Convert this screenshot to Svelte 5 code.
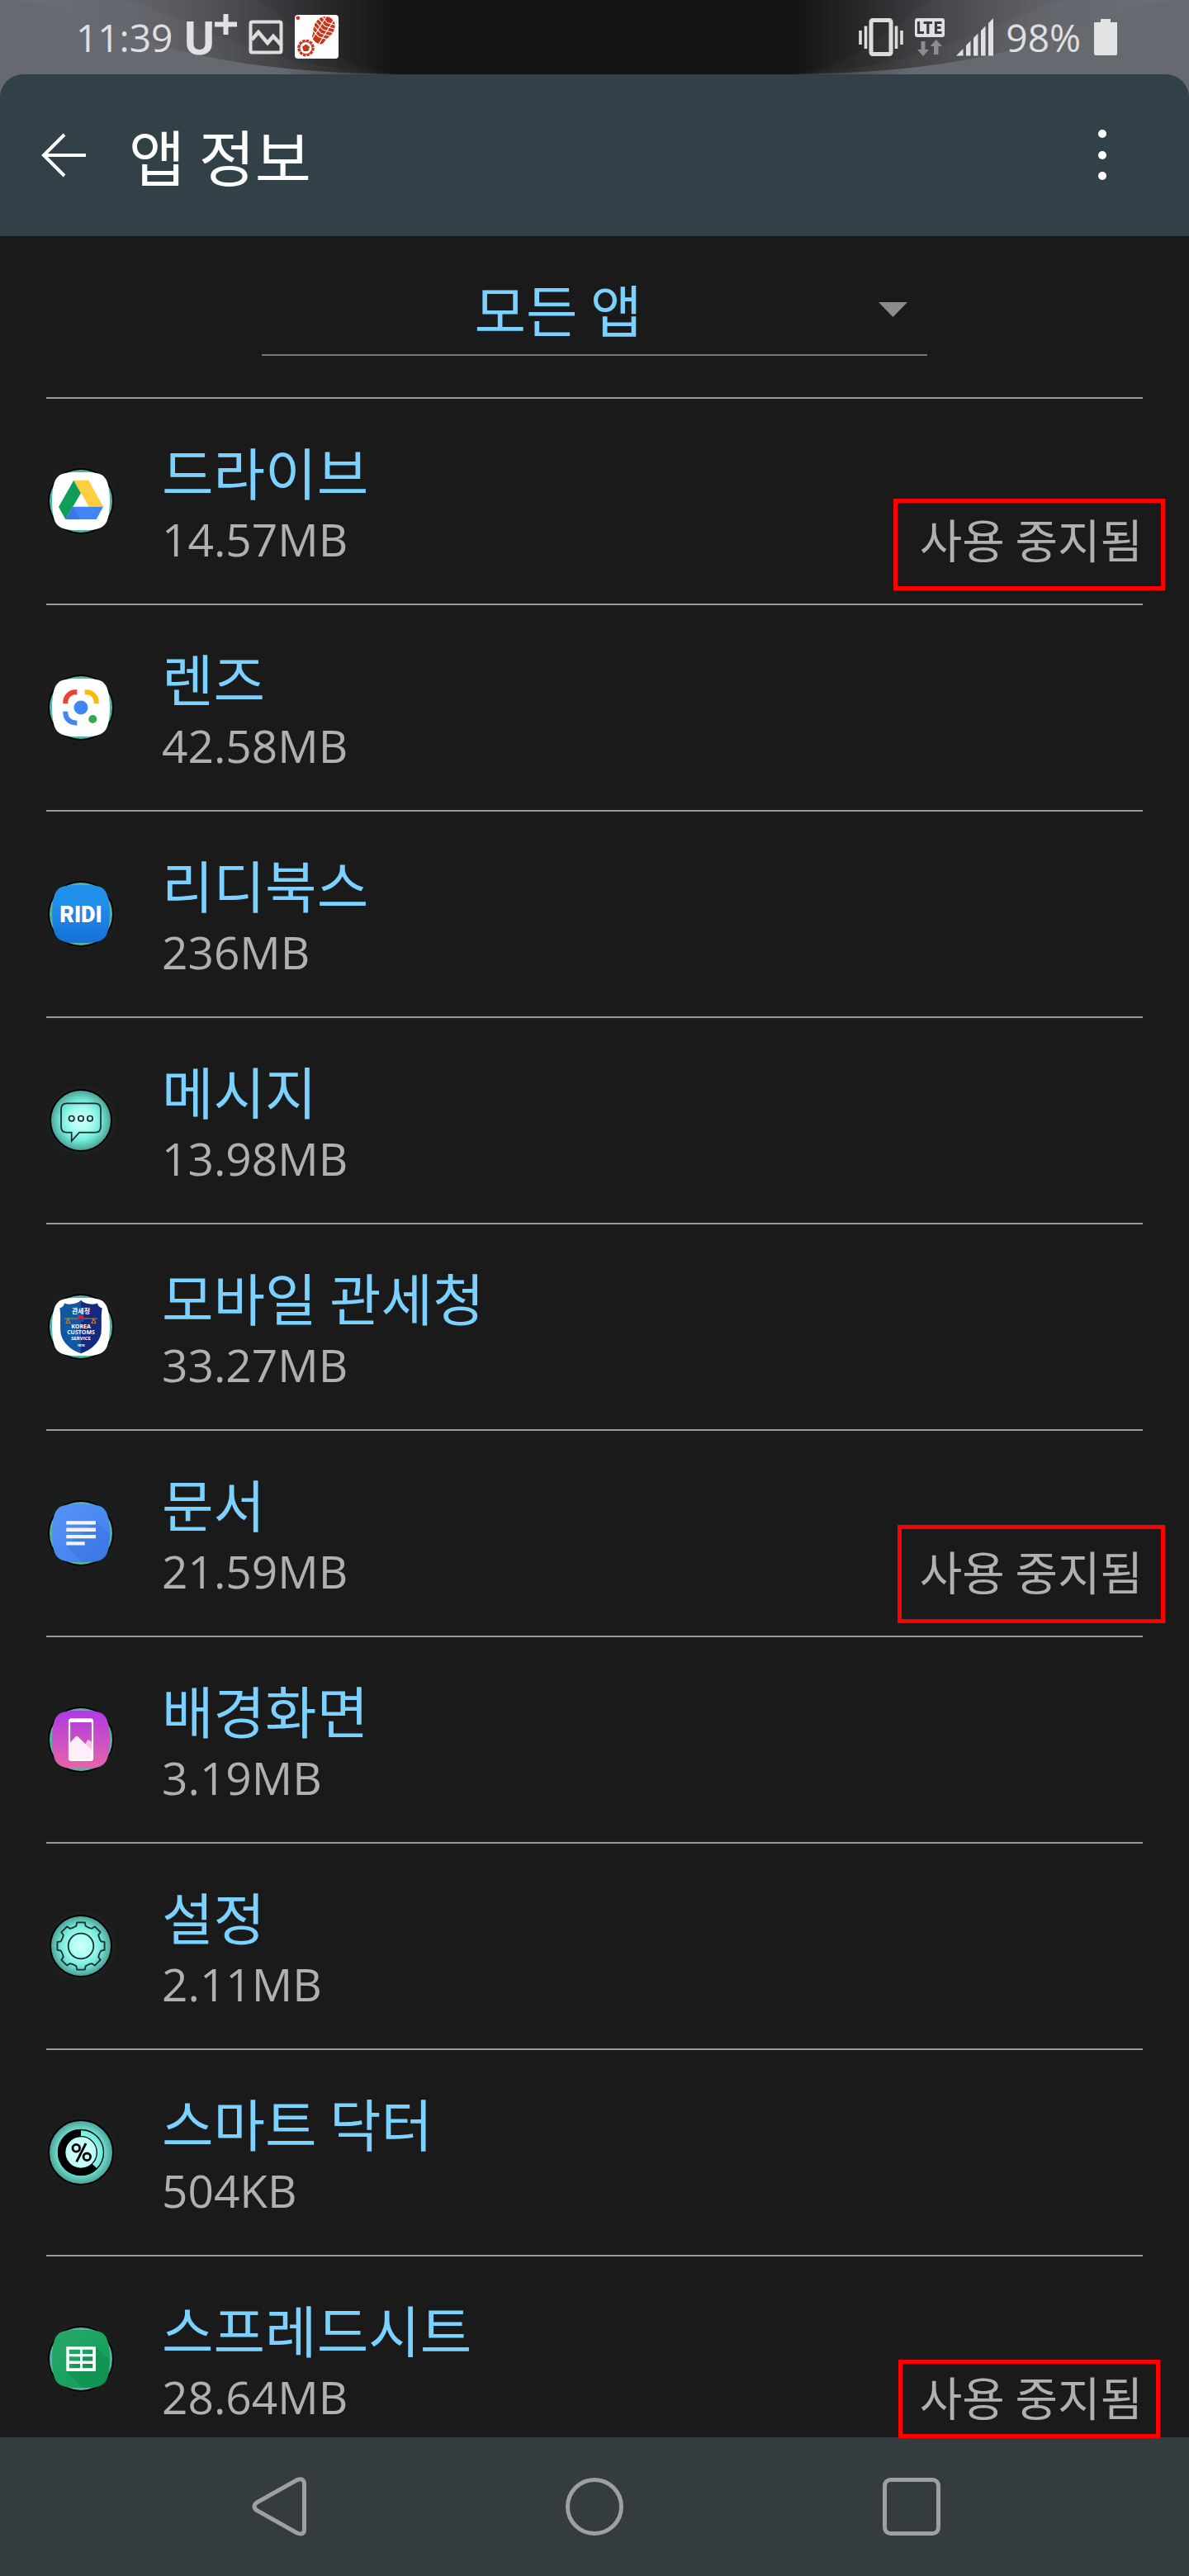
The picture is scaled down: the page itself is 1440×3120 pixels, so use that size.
<script>
  const apps = [
    { name: '드라이브', size: '14.57MB', icon: 'drive', mark: 'mark-a' },
    { name: '렌즈', size: '42.58MB', icon: 'lens' },
    { name: '리디북스', size: '236MB', icon: 'ridi' },
    { name: '메시지', size: '13.98MB', icon: 'messages' },
    { name: '모바일 관세청', size: '33.27MB', icon: 'customs' },
    { name: '문서', size: '21.59MB', icon: 'docs', mark: 'mark-b' },
    { name: '배경화면', size: '3.19MB', icon: 'wallpaper' },
    { name: '설정', size: '2.11MB', icon: 'settings' },
    { name: '스마트 닥터', size: '504KB', icon: 'doctor' },
    { name: '스프레드시트', size: '28.64MB', icon: 'sheets', mark: 'mark-c' }
  ];

  const squircle =
    'M42 7C56 7 62 7.5 67 10C73 14 75 20 76 28C77.3 37 77.3 47 76 56C75 64 73 70 67 73.5C62 76.5 56 77 42 77C28 77 22 76.5 17 73.5C11 70 9 64 8 56C6.7 47 6.7 37 8 28C9 20 11 14 17 10C22 7.5 28 7 42 7Z';
  const plateFill = {
    drive: '#fff',
    lens: '#fff',
    ridi: 'url(#g-ridi)',
    customs: '#fff',
    docs: 'url(#g-docs)',
    wallpaper: 'url(#g-wall)',
    sheets: 'url(#g-sheets)'
  };

  // Outline of an eight-toothed gear centred on 42,42.
  const gear = Array.from({ length: 8 }, (_, i) => {
    const a = (i * Math.PI) / 4;
    return [[-8, -23], [-5.6, -24.4], [-4.8, -28.6], [4.8, -28.6], [5.6, -24.4], [8, -23]]
      .map(([x, y]) => {
        const px = 42 + x * Math.cos(a) - y * Math.sin(a);
        const py = 42 + x * Math.sin(a) + y * Math.cos(a);
        return `${px.toFixed(1)},${py.toFixed(1)}`;
      })
      .join(' ');
  }).join(' ');
</script>

<svg class="defs" width="0" height="0" aria-hidden="true">
  <defs>
    <radialGradient id="g-mint">
      <stop offset="0" stop-color="#d2fffa" />
      <stop offset="0.35" stop-color="#a9fff3" />
      <stop offset="0.65" stop-color="#74ecdb" />
      <stop offset="1" stop-color="#4a9e93" />
    </radialGradient>
    <radialGradient id="g-glow">
      <stop offset="0.7" stop-color="#2a302f" />
      <stop offset="1" stop-color="#1b1c1c" />
    </radialGradient>
    <linearGradient id="g-ridi" x1="0" y1="0" x2="0" y2="1">
      <stop offset="0.3" stop-color="#2190ea" />
      <stop offset="1" stop-color="#1670d8" />
    </linearGradient>
    <linearGradient id="g-docs" x1="0" y1="0" x2="1" y2="1">
      <stop offset="0" stop-color="#5693f5" />
      <stop offset="1" stop-color="#3f7ff0" />
    </linearGradient>
    <linearGradient id="g-wall" x1="0" y1="0" x2="0" y2="1">
      <stop offset="0" stop-color="#b03ae2" />
      <stop offset="1" stop-color="#e665a8" />
    </linearGradient>
    <linearGradient id="g-sheets" x1="0" y1="0" x2="1" y2="1">
      <stop offset="0" stop-color="#28a868" />
      <stop offset="1" stop-color="#109c57" />
    </linearGradient>
    <linearGradient id="g-sky" gradientUnits="userSpaceOnUse" x1="0" y1="0" x2="480" y2="0">
      <stop offset="0" stop-color="#666872" />
      <stop offset="0.33" stop-color="#5d6068" />
      <stop offset="0.42" stop-color="#595a5e" />
      <stop offset="0.62" stop-color="#434447" />
      <stop offset="0.83" stop-color="#27282a" />
      <stop offset="1" stop-color="#131416" />
    </linearGradient>
    <linearGradient id="g-wave" gradientUnits="userSpaceOnUse" x1="0" y1="0" x2="480" y2="0">
      <stop offset="0" stop-color="#676971" />
      <stop offset="0.7" stop-color="#676971" />
      <stop offset="1" stop-color="#3a3b3f" />
    </linearGradient>
  </defs>
</svg>

{#snippet waves()}
  <svg class="waves" viewBox="0 0 480 130" preserveAspectRatio="none" aria-hidden="true">
    <rect width="480" height="130" fill="url(#g-sky)" />
    <path d="M310 0C350 20 395 80 480 90V130H0V0Z" fill="#fff" opacity="0.025" />
    <path d="M150 0C240 22 290 78 480 90V130H0V0Z" fill="#fff" opacity="0.03" />
    <path d="M20 0C130 14 170 86 480 90V130H0V0Z" fill="url(#g-wave)" />
  </svg>
{/snippet}

{#snippet appIcon(kind)}
  <svg class="app-icon" viewBox="0 0 84 84" aria-hidden="true">
    <rect width="84" height="84" fill="url(#g-glow)" />
    {#if plateFill[kind]}
      <circle cx="42" cy="42" r="39" fill="#55b3a6" stroke="#000" stroke-width="2" />
      <path d={squircle} fill={plateFill[kind]} />
    {:else}
      <circle cx="42" cy="42" r={kind === 'doctor' ? 39 : 37} fill="url(#g-mint)" stroke="#000" stroke-width="2" />
    {/if}

    {#if kind === 'drive'}
      <path d="M33.3 16.7L42 32.3L23.3 64L15 49Z" fill="#109d58" />
      <path d="M33.3 16.7H51.3L69 48.7H51.7Z" fill="#ffcd40" />
      <path d="M32.3 48.7H69L60.7 64H23.3Z" fill="#4285f4" />
      <path d="M32.3 48.7L41 64H23.3Z" fill="#3367d6" opacity="0.5" />
    {:else if kind === 'lens'}
      <g fill="none" stroke-width="6">
        <path d="M23.3 37.3V35.3A12 12 0 0 1 35.3 23.3H37.3" stroke="#ea4335" />
        <path d="M46.7 23.3H48.7A12 12 0 0 1 60.7 35.3V37.3" stroke="#fbbc04" />
        <path d="M23.3 46.7V48.4A12 12 0 0 0 35.3 60.4H37.3" stroke="#4285f4" />
      </g>
      <circle cx="42" cy="42" r="8.5" fill="#4285f4" />
      <circle cx="56.3" cy="56" r="5" fill="#34a853" />
    {:else if kind === 'ridi'}
      <text x="42" y="51.5" text-anchor="middle" class="ridi">RIDI</text>
    {:else if kind === 'messages'}
      <g fill="none" stroke="#1d2a29" stroke-width="1.7">
        <path d="M25 21.3H59Q66 21.3 66 28.5V49.5Q66 56.7 59 56.7H40L30.7 67V56.7H25Q18 56.7 18 49.5V28.5Q18 21.3 25 21.3Z" />
        <circle cx="30.7" cy="39.7" r="3.2" />
        <circle cx="42" cy="39.7" r="3.2" />
        <circle cx="53" cy="39.7" r="3.2" />
      </g>
    {:else if kind === 'customs'}
      <path d="M42 9.7Q38 14 30 14.5Q25 15 22 13.5Q21 18 16.3 19.5C18 28 16.5 38 17.5 50C20 62 30 70 42 74.3Z" fill="#1058a2" />
      <path d="M42 9.7Q46 14 54 14.5Q59 15 62 13.5Q63 18 67.7 19.5C66 28 67.5 38 66.5 50C64 62 54 70 42 74.3Z" fill="#132a80" />
      <g fill="none" stroke="#b98532" stroke-width="1.2">
        <path d="M22 32H62M26.3 32L24 37.5H29L26.3 32M57.3 32L55 37.5H60L57.3 32" />
      </g>
      <path d="M38 32A4 4 0 0 1 46 32Z" fill="#d8232f" />
      <path d="M38 32A4 4 0 0 0 46 32Z" fill="#1f4fb0" />
      <g fill="#fff" text-anchor="middle" class="customs">
        <text x="42" y="25.5" font-size="8">관세청</text>
        <text x="42" y="44" font-size="7">KOREA</text>
        <text x="42" y="51" font-size="7">CUSTOMS</text>
        <text x="42" y="57.6" font-size="6">SERVICE</text>
        <text x="42" y="66" font-size="4">1878</text>
      </g>
    {:else if kind === 'docs'}
      <path d="M60 27.5L76.5 43C76.5 60 76 74 60 76.5L43 76.8L24.3 58Z" fill="#3a74dd" opacity="0.55" />
      <path d="M24.3 27.3H60V31.6H24.3ZM24.3 35.6H60V39.9H24.3ZM24.3 43.9H60V48.2H24.3ZM24.3 52.2H46.7V56.5H24.3Z" fill="#f4f4f4" />
    {:else if kind === 'wallpaper'}
      <rect x="28" y="17.3" width="28" height="49.6" rx="2.5" fill="none" stroke="#fff" stroke-width="2.2" />
      <path d="M28 17.5H56V21H28Z" fill="#fff" />
      <path d="M46 50L50 42.5Q51 41.5 52 42.5L55.3 45.5V56Z" fill="#f7c3e4" />
      <path d="M29 45.5L35.5 38.5Q37 37 38.5 38.5L55.3 55V66H29Z" fill="#fdeefa" />
    {:else if kind === 'settings'}
      <g fill="none" stroke="#1c2b2a" stroke-width="1.8" stroke-linejoin="round">
        <polygon points={gear} />
        <circle cx="42" cy="42" r="15.3" />
      </g>
    {:else if kind === 'doctor'}
      <circle cx="42" cy="42" r="19.3" fill="#d6fffb" opacity="0.6" />
      <circle cx="42" cy="42" r="27.5" fill="none" stroke="#000" stroke-width="1.3" />
      <circle cx="42" cy="42" r="19.3" fill="none" stroke="#000" stroke-width="1.3" />
      <path d="M42 18.5A23.5 23.5 0 1 0 58.6 58.6" fill="none" stroke="#000" stroke-width="9" />
      <g fill="none" stroke="#000" stroke-width="2.8">
        <circle cx="36.3" cy="36.7" r="4.3" />
        <circle cx="49.3" cy="47.3" r="4.3" />
        <path d="M48 31L36.7 53.3" />
      </g>
    {:else if kind === 'sheets'}
      <path d="M60 27.5L76.5 43C76.5 60 76 74 60 76.5L43 76.8L24.3 57Z" fill="#0c8a4b" opacity="0.5" />
      <path fill-rule="evenodd" fill="#fff" d="M24.3 27.3H60V57H24.3ZM27.8 30.7V36H41V30.7ZM44 30.7V36H56.3V30.7ZM27.8 39.3V44.6H41V39.3ZM44 39.3V44.6H56.3V39.3ZM27.8 48V53.3H41V48ZM44 48V53.3H56.3V48Z" />
    {/if}
  </svg>
{/snippet}

<div class="screen">
  <div class="backdrop">
    {@render waves()}
    <div class="flip">{@render waves()}</div>
  </div>

  <div class="status-bar">
    <div class="group">
      <span class="status-text">11:39</span>
      <svg width="64" height="86" viewBox="0 0 64 86" aria-label="U+">
        <text x="0" y="64" class="carrier">U</text>
        <path d="M37 27.5H64M50.5 15V40" stroke="#e0e1e2" stroke-width="6" />
      </svg>
      <svg width="42" height="42" viewBox="0 0 42 42" aria-hidden="true">
        <g fill="none" stroke="#dcdddd" stroke-width="4">
          <rect x="2.5" y="2.5" width="37" height="37" rx="2" />
          <path d="M4 24L12 15L23 28L30 20L40 31" stroke-width="4.5" />
        </g>
      </svg>
      <svg width="54" height="54" viewBox="0 0 54 54" aria-hidden="true">
        <rect width="53" height="53" rx="4" fill="#fff" />
        <circle cx="3.8" cy="3.8" r="2.4" fill="#c8351b" />
        <g transform="rotate(32 34 18)">
          <path d="M33 1C42 0 47 8 46 16C45 23 43 26 43 31C43 37 29 37 27 31C26 26 22 22 22 15C22 8 26 2 33 1Z" fill="#c8351b" />
          <g stroke="#fff" stroke-width="1.1" fill="none">
            <path d="M20 4L34 8L48 4M20 9L34 13L48 9M20 14L34 18L48 14M20 19L34 23L48 19M20 24L34 28L48 24" />
            <path d="M29 0V36M39 0V36" />
          </g>
        </g>
        <circle cx="13.5" cy="40" r="9" fill="none" stroke="#c8351b" stroke-width="2.6" stroke-dasharray="3.6 1.1" />
        <circle cx="13.5" cy="40" r="7.6" fill="none" stroke="#c8351b" stroke-width="1.2" />
        <path d="M13.5 35.5L18 38.8L16.3 44H10.7L9 38.8Z" fill="#c8351b" />
      </svg>
    </div>
    <div class="group">
      <svg width="54" height="46" viewBox="0 0 54 46" aria-hidden="true">
        <rect x="15" y="2.5" width="24" height="41" rx="2" fill="none" stroke="#dcdddb" stroke-width="5" />
        <path d="M8.5 9.5V37M45.5 9.5V37M2 15V32M52 15V32" stroke="#dcdddb" stroke-width="3.6" />
      </svg>
      <svg width="36" height="46" viewBox="0 0 36 46" aria-label="LTE">
        <rect width="36" height="23" rx="3" fill="#dfe0e2" />
        <path d="M4.5 4V17.5H11M10.5 5.5H21M15.8 5V19M32.5 5.5H25.5V17.5H32.5M25.5 11.5H31.5" fill="none" stroke="#3a3b40" stroke-width="3.2" />
        <path d="M7.5 28H12.5V38H17L10 46L3 38H7.5ZM23 44V34H18.5L25.8 26L33 34H28.5V44Z" fill="#8b8c90" />
      </svg>
      <svg width="46" height="46" viewBox="0 0 46 46" aria-hidden="true">
        <path d="M0 45.5L8.5 37V45.5ZM12 33L17.5 27.5V45.5H12ZM21 24L26.5 18.5V45.5H21ZM30 15L35.5 9.5V45.5H30ZM39 6L45 0V45.5H39Z" fill="#e0e1e3" />
      </svg>
      <span class="status-text">98%</span>
      <svg width="30" height="45" viewBox="0 0 30 45" aria-hidden="true">
        <path d="M10 0H22V4H30V42Q30 44 28 44H4Q2 44 2 42V4H10Z" fill="#e2e3e5" />
      </svg>
    </div>
  </div>

  <header>
    <button class="icon-button" aria-label="뒤로">
      <svg width="54" height="54" viewBox="0 0 54 54" aria-hidden="true">
        <path d="M28 2L3 27L28 52M3 27H54" fill="none" stroke="#fff" stroke-width="4" />
      </svg>
    </button>
    <h1>앱 정보</h1>
    <button class="icon-button more" aria-label="더보기">
      <svg width="12" height="64" viewBox="0 0 12 64" aria-hidden="true">
        <g fill="#fff"><circle cx="6" cy="6" r="5" /><circle cx="6" cy="32" r="5" /><circle cx="6" cy="57" r="5" /></g>
      </svg>
    </button>
  </header>

  <main>
    <div class="filter">
      <select aria-label="앱 필터">
        <option>모든 앱</option>
      </select>
      <svg class="caret" width="35" height="18" viewBox="0 0 35 18" aria-hidden="true">
        <path d="M0 0H35L17.5 18Z" fill="#8c8c8c" />
      </svg>
    </div>

    <ul>
      {#each apps as app}
        <li>
          {@render appIcon(app.icon)}
          <div class="info">
            <span class="name">{app.name}</span>
            <span class="size">{app.size}</span>
          </div>
          {#if app.mark}
            <span class="state {app.mark}">사용 중지됨</span>
          {/if}
        </li>
      {/each}
    </ul>
  </main>

  <nav>
    <button aria-label="뒤로 가기">
      <svg width="72" height="72" viewBox="0 0 72 72" aria-hidden="true">
        <path d="M60 3.5L11 31Q5 35.5 11 40.5L60 68Q68 71 68.5 64V8Q68 1 60 3.5Z" />
      </svg>
    </button>
    <button aria-label="홈">
      <svg width="72" height="72" viewBox="0 0 72 72" aria-hidden="true">
        <circle cx="36" cy="36" r="32.5" />
      </svg>
    </button>
    <button aria-label="최근 앱">
      <svg width="72" height="72" viewBox="0 0 72 72" aria-hidden="true">
        <rect x="3.5" y="3.5" width="65" height="65" rx="7" />
      </svg>
    </button>
  </nav>
</div>

<style>
  :global(body) {
    margin: 0;
    background: #1a1a1a;
  }
  .defs {
    position: absolute;
  }
  .screen {
    position: relative;
    display: flex;
    flex-direction: column;
    min-height: 100vh;
    overflow: hidden;
    background: #1a1a1a;
    font-family: 'Open Sans', 'Noto Sans CJK KR', sans-serif;
  }
  button {
    display: flex;
    align-items: center;
    justify-content: center;
    padding: 0;
    border: 0;
    background: none;
    cursor: pointer;
  }
  .backdrop {
    position: absolute;
    inset: 0 0 auto;
    display: flex;
    justify-content: space-between;
    height: 130px;
    background: #131416;
  }
  .backdrop > :global(*) {
    width: 33.333%;
    height: 130px;
  }
  .flip {
    transform: scaleX(-1);
  }
  .flip > :global(svg) {
    width: 100%;
    height: 100%;
  }
  .status-bar {
    position: relative;
    display: flex;
    justify-content: space-between;
    height: 90px;
    padding: 0 87px 0 92px;
  }
  .group {
    display: flex;
    align-items: center;
    gap: 14px;
  }
  .status-text {
    color: #dfe0e2;
    font-size: 46px;
    line-height: 56px;
  }
  .carrier {
    fill: #e0e1e2;
    font: 700 56px Roboto, sans-serif;
  }
  header {
    position: relative;
    display: flex;
    align-items: center;
    height: 196px;
    padding: 0 99px 0 50px;
    border-radius: 28px 28px 0 0;
    background: #324047;
  }
  h1 {
    margin: 0 auto 0 52px;
    color: #fff;
    font: 400 74px/96px 'Noto Sans CJK KR', sans-serif;
  }
  .filter {
    display: grid;
    align-items: center;
    padding: 32px 22% 50px;
  }
  select {
    grid-area: 1 / 1;
    width: 100%;
    height: 113px;
    padding: 0 88px 0 0;
    border: 0;
    border-bottom: 2px solid #777;
    border-radius: 0;
    background: none;
    appearance: none;
    color: #7bd1ff;
    font: 400 68px 'Noto Sans CJK KR', sans-serif;
    text-align: center;
    text-align-last: center;
  }
  .caret {
    grid-area: 1 / 1;
    justify-self: end;
    margin-right: 24px;
    pointer-events: none;
  }
  ul {
    margin: 0;
    padding: 0 56px;
    list-style: none;
  }
  li {
    position: relative;
    display: flex;
    align-items: flex-start;
    min-height: 248px;
    border-top: 2px solid #999b9b;
  }
  li:last-child {
    min-height: 219px;
  }
  .app-icon {
    flex: none;
    width: 84px;
    height: 84px;
    margin-top: 82px;
  }
  .info {
    display: flex;
    flex: 1;
    flex-direction: column;
    padding: 48px 0 0 56px;
  }
  .name {
    color: #7bd1ff;
    font: 400 68px/80px 'Noto Sans CJK KR', sans-serif;
  }
  .size {
    color: #b0b0b0;
    font-size: 55px;
    line-height: 84px;
  }
  .state {
    position: relative;
    margin-top: 129px;
    color: #b0b0b0;
    font: 400 56px/80px 'Noto Sans CJK KR', sans-serif;
  }
  .state::after {
    position: absolute;
    border: 5px solid #f00;
    content: '';
  }
  .mark-a::after {
    inset: -8px -27px -23px -32px;
  }
  .mark-b::after {
    inset: -15px -27px -24px -27px;
  }
  .mark-c::after {
    inset: -4px -21px -11px -26px;
  }
  li:last-child .state {
    z-index: 1;
  }
  nav {
    position: relative;
    display: grid;
    flex: 1;
    grid-template-columns: repeat(3, 1fr);
    min-height: 168px;
    padding: 0 10%;
    background: #343c40;
  }
  nav svg {
    fill: none;
    stroke: #9da0a2;
    stroke-width: 5;
    stroke-linejoin: round;
  }
  .ridi {
    fill: #fff;
    font: 900 27px Roboto, sans-serif;
  }
  .customs {
    font-family: 'Open Sans', 'Noto Sans CJK KR', sans-serif;
    font-weight: 700;
  }
</style>
